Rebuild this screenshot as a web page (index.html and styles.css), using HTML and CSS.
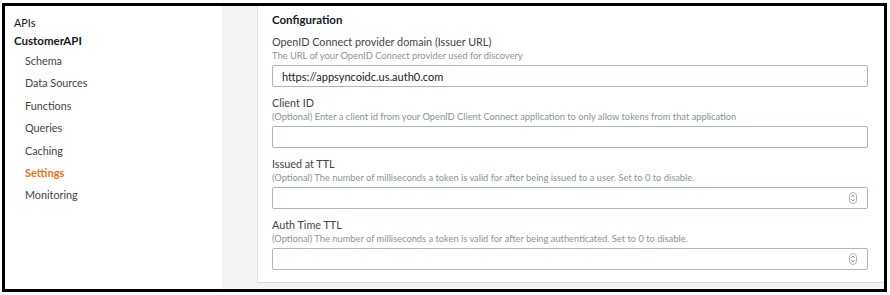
FILE: index.html
```html
<!DOCTYPE html>
<html lang="en">
<head>
  <meta charset="UTF-8">
  <title>AppSync Settings</title>
  <link rel="stylesheet" href="styles.css">
</head>
<body>
  <div class="frame">
    <nav class="sidebar">
      <div class="nav-top">APIs</div>
      <div class="nav-api">CustomerAPI</div>
      <a class="nav-item">Schema</a>
      <a class="nav-item">Data Sources</a>
      <a class="nav-item">Functions</a>
      <a class="nav-item">Queries</a>
      <a class="nav-item">Caching</a>
      <a class="nav-item active">Settings</a>
      <a class="nav-item">Monitoring</a>
    </nav>

    <main class="main">
      <section class="card">
        <h2 class="card-title">Configuration</h2>

        <div class="field">
          <label class="label">OpenID Connect provider domain (Issuer URL)</label>
          <div class="desc">The URL of your OpenID Connect provider used for discovery</div>
          <input class="input" type="text" value="https://appsyncoidc.us.auth0.com">
        </div>

        <div class="field">
          <label class="label">Client ID</label>
          <div class="desc">(Optional) Enter a client id from your OpenID Client Connect application to only allow tokens from that application</div>
          <input class="input" type="text">
        </div>

        <div class="field">
          <label class="label">Issued at TTL</label>
          <div class="desc">(Optional) The number of milliseconds a token is valid for after being issued to a user. Set to 0 to disable.</div>
          <div class="number">
            <input class="input" type="text">
            <svg class="spin" width="8" height="12" viewBox="0 0 8 12">
              <rect x="0.5" y="0.5" width="7" height="11" rx="3.5" fill="#fff" stroke="#aab7b8"/>
              <path d="M2.6 4.6 L4 3.2 L5.4 4.6 M2.6 7.4 L4 8.8 L5.4 7.4" fill="none" stroke="#545b64" stroke-width="0.9"/>
            </svg>
          </div>
        </div>

        <div class="field">
          <label class="label">Auth Time TTL</label>
          <div class="desc">(Optional) The number of milliseconds a token is valid for after being authenticated. Set to 0 to disable.</div>
          <div class="number">
            <input class="input" type="text">
            <svg class="spin" width="8" height="12" viewBox="0 0 8 12">
              <rect x="0.5" y="0.5" width="7" height="11" rx="3.5" fill="#fff" stroke="#aab7b8"/>
              <path d="M2.6 4.6 L4 3.2 L5.4 4.6 M2.6 7.4 L4 8.8 L5.4 7.4" fill="none" stroke="#545b64" stroke-width="0.9"/>
            </svg>
          </div>
        </div>
      </section>
    </main>
  </div>
</body>
</html>
```

FILE: styles.css
```css
* {
  margin: 0;
  padding: 0;
  box-sizing: border-box;
  font-family: 'Lato', 'Liberation Sans', sans-serif;
}

body {
  background: #fff;
}

.frame {
  display: flex;
  width: 885px;
  height: 289px;
  margin: 3px 0 0 2px;
  border: 3px solid #000;
  overflow: hidden;
}

/* left navigation */
.sidebar {
  width: 217px;
  background: #fff;
  padding: 7px 0 0 9px;
  font-size: 10.8px;
  color: #16191f;
}

.nav-top {
  line-height: 19px;
}

.nav-api {
  line-height: 18px;
  font-size: 11.5px;
  font-weight: bold;
}

.nav-item {
  display: block;
  line-height: 22.4px;
  padding-left: 11px;
  color: #444;
}

.nav-item.active {
  color: #ec7211;
  font-size: 11px;
  font-weight: bold;
}

/* content */
.main {
  flex: 1;
  background: #f2f3f3;
  padding: 0 0 6px 35px;
}

.card {
  height: 100%;
  background: #fff;
  border-left: 1px solid #e1e4e4;
  border-bottom: 1px solid #d5dbdb;
  padding: 6px 16px 0 14px;
}

.card-title {
  font-size: 11.5px;
  font-weight: bold;
  line-height: 16px;
  color: #16191f;
  margin-bottom: 7px;
}

.field {
  margin-bottom: 9px;
}

.label {
  display: block;
  font-size: 10.8px;
  line-height: 14px;
  color: #444;
}

.desc {
  font-size: 9.3px;
  line-height: 13px;
  color: #879596;
  margin-bottom: 3px;
}

.input {
  display: block;
  width: 100%;
  height: 22px;
  border: 1px solid #aab7b8;
  border-radius: 2px;
  padding: 0 9px;
  font-size: 11px;
  color: #16191f;
  background: #fff;
  outline: none;
}

.number {
  position: relative;
}

.spin {
  position: absolute;
  right: 11px;
  top: 5px;
}
```
